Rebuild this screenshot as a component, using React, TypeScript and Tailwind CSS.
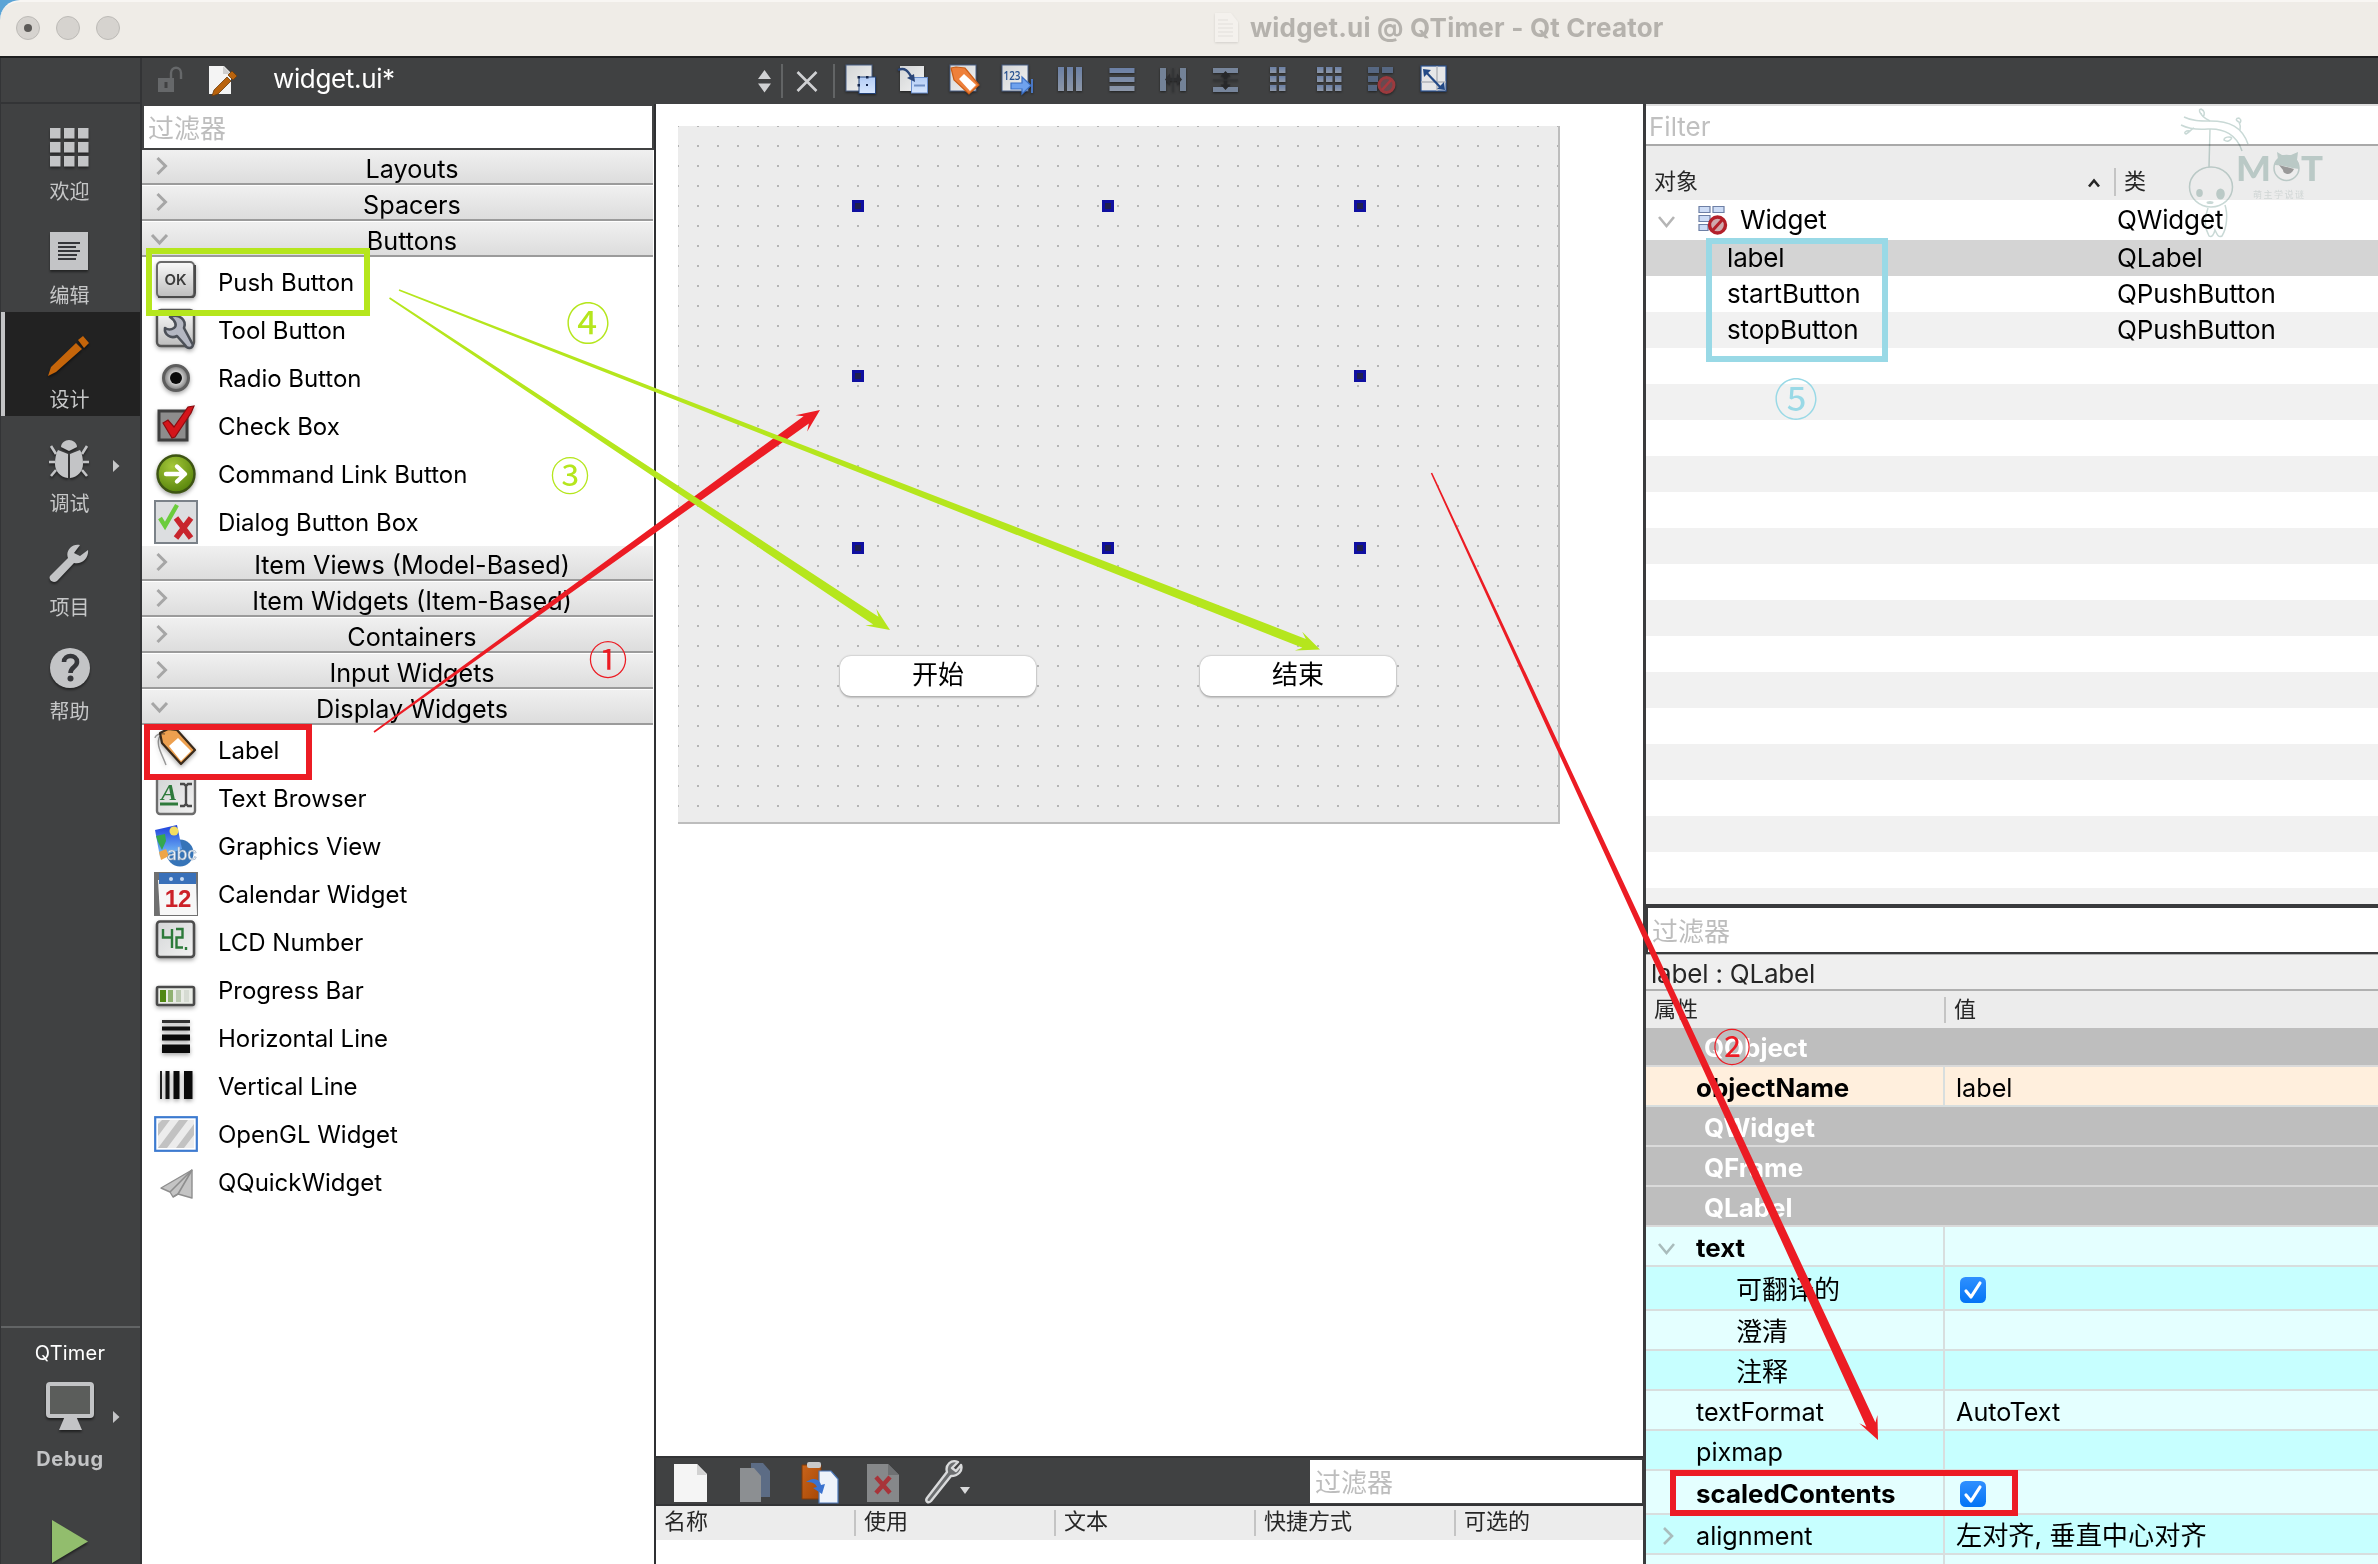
import React from "react";

type IconProps = { children: React.ReactNode; w?: number; h?: number; className?: string; vb?: string };

function Svg({ children, w = 44, h = 44, className = "", vb }: IconProps) {
  return (
    <svg width={w} height={h} viewBox={vb ?? `0 0 ${w} ${h}`} className={`shrink-0 ${className}`}>
      {children}
    </svg>
  );
}

function Defs() {
  return (
    <svg width="0" height="0" className="absolute">
      <defs>
        <linearGradient id="gBtn" x1="0" y1="0" x2="0" y2="1">
          <stop offset="0" stopColor="#fafafa" />
          <stop offset="1" stopColor="#bdbdbd" />
        </linearGradient>
        <linearGradient id="gPage" x1="0" y1="0" x2="1" y2="1">
          <stop offset="0" stopColor="#d3d5d6" />
          <stop offset="1" stopColor="#f2f2f2" />
        </linearGradient>
        <linearGradient id="gBlue" x1="0" y1="0" x2="0" y2="1">
          <stop offset="0" stopColor="#b4cdf5" />
          <stop offset="1" stopColor="#d6e6fd" />
        </linearGradient>
        <linearGradient id="gBar" x1="0" y1="0" x2="0" y2="1">
          <stop offset="0" stopColor="#6b80a6" />
          <stop offset="1" stopColor="#8d97a8" />
        </linearGradient>
        <radialGradient id="gGreen" cx="0.4" cy="0.3" r="0.8">
          <stop offset="0" stopColor="#a5c83a" />
          <stop offset="1" stopColor="#4f7d06" />
        </radialGradient>
        <radialGradient id="gRadio" cx="0.5" cy="0.5" r="0.5">
          <stop offset="0.45" stopColor="#d4d4d4" />
          <stop offset="1" stopColor="#747474" />
        </radialGradient>
        <linearGradient id="gCheck" x1="0" y1="0" x2="0" y2="1">
          <stop offset="0" stopColor="#2f90ff" />
          <stop offset="1" stopColor="#0374f5" />
        </linearGradient>
        <linearGradient id="gClip" x1="0" y1="0" x2="1" y2="1">
          <stop offset="0" stopColor="#c9641b" />
          <stop offset="1" stopColor="#a64705" />
        </linearGradient>
        <linearGradient id="gGl" x1="0" y1="0" x2="0" y2="1">
          <stop offset="0" stopColor="#1d3fdc" />
          <stop offset="1" stopColor="#7cc7f7" />
        </linearGradient>
      </defs>
    </svg>
  );
}

/* ---------- palette icons, 44 × 44 ---------- */

const shadow = "drop-shadow-[0_2px_2px_rgba(0,0,0,0.35)]";

const PushIcon = () => (
  <Svg className={shadow}>
    <rect x="3" y="2" width="37" height="35" rx="4" fill="url(#gBtn)" stroke="#6a6a6a" strokeWidth="2" />
    <path d="M4 37h35q2-1 2-4V5" fill="none" stroke="#4a4a4a" strokeWidth="2" />
    <text x="21.5" y="24.5" fontSize="15" textAnchor="middle" fontFamily="Inter, sans-serif" fontWeight="600" fill="#3c3c3c">OK</text>
  </Svg>
);
const ToolIcon = () => (
  <Svg className={shadow}>
    <rect x="3" y="2" width="37" height="36" rx="4" fill="url(#gBtn)" stroke="#555" strokeWidth="2.4" />
    <path d="M16 9c9-4 17 3 14 11l9 17c-1 4-6 4-8 0l-8-9c-6 3-13-1-12-8 3 2 6 2 9 0s2-7-4-11z" fill="#b4b7c2" stroke="#4c5058" strokeWidth="2.6" strokeLinejoin="round" />
  </Svg>
);
const RadioIcon = () => (
  <Svg className={shadow}>
    <circle cx="22" cy="22" r="12.5" fill="url(#gRadio)" stroke="#5e5e5e" strokeWidth="3" />
    <circle cx="22" cy="22" r="6" fill="#0a0a0a" />
  </Svg>
);
const CheckIcon = () => (
  <Svg className={shadow}>
    <rect x="5" y="7" width="28" height="29" fill="#8d8d8d" stroke="#3f3f3f" strokeWidth="3" />
    <path d="M9 19l5-3 6 7L34 3l6-1-3 7-16 24-3 1z" fill="#d4151b" stroke="#8c0b10" strokeWidth="1.2" />
  </Svg>
);
const LinkIcon = () => (
  <Svg className={shadow}>
    <circle cx="22" cy="22" r="18.5" fill="url(#gGreen)" stroke="#3d5413" strokeWidth="2.4" />
    <path d="M12 22h17M23 14.5l8 7.5-8 7.5" fill="none" stroke="#fff" strokeWidth="4.4" strokeLinecap="round" strokeLinejoin="round" />
  </Svg>
);
const DialogIcon = () => (
  <Svg>
    <rect x="1" y="1" width="42" height="42" fill="#dcdee0" stroke="#7b8289" strokeWidth="2" />
    <path d="M6 18l5 8L23 5" fill="none" stroke="#6bcc3c" strokeWidth="4.4" />
    <path d="M22 18l15 20M37 18L22 38" stroke="#c8252d" strokeWidth="5.6" />
  </Svg>
);
const LabelIcon = () => (
  <Svg className={shadow}>
    <path d="M6 5l8-4 9 1 18 20-14 14L8 15z" fill="#eda04f" stroke="#3a2a1a" strokeWidth="2.2" strokeLinejoin="round" />
    <path d="M24 10l13 13-10 10L15 18z" fill="#fff" />
    <path d="M11 6C4 5 1 8 1 10M6 8c-5 8 2 18 6 29" stroke="#222" strokeWidth="1.4" fill="none" opacity=".45" />
  </Svg>
);
const TextIcon = () => (
  <Svg>
    <rect x="3" y="1" width="38" height="37" rx="3" fill="url(#gPage)" stroke="#6d6d6d" strokeWidth="2.4" />
    <text x="15" y="24" fontSize="24" textAnchor="middle" fontFamily="Liberation Serif, serif" fontWeight="700" fontStyle="italic" fill="#2e7a3c">A</text>
    <path d="M6 28h18" stroke="#2e7a3c" strokeWidth="3" />
    <path d="M26 8h4l2 2 2-2h4M32 10v18M26 30h4l2-2 2 2h4" stroke="#4a4a4a" strokeWidth="2.4" fill="none" />
  </Svg>
);
const GraphicsIcon = () => (
  <Svg>
    <circle cx="26" cy="29" r="13.5" fill="#3674b8" />
    <path d="M1 6l22-5 5 24-22 8z" fill="url(#gGl)" />
    <path d="M2 12l9-2 1 7-4 9-4-8z" fill="#35a84d" />
    <circle cx="20" cy="7" r="4.5" fill="#f4dd62" />
    <path d="M5 28l7-3 3 7-8 4z" fill="#efa548" />
    <text x="13" y="36" fontSize="17" fontFamily="Inter, sans-serif" fontWeight="500" fill="#e9f1fa" stroke="#98a8bb" strokeWidth=".5">abc</text>
  </Svg>
);
const CalendarIcon = () => (
  <Svg>
    <rect width="44" height="44" fill="#707070" />
    <path d="M4 8h38l1 35H6z" fill="#f7f7f7" />
    <rect x="5" y="1" width="37" height="11" fill="#3970b9" />
    <circle cx="17" cy="7" r="2" fill="#c9dbf2" />
    <circle cx="28" cy="7" r="2" fill="#c9dbf2" />
    <text x="24" y="35" fontSize="24" textAnchor="middle" fontFamily="Liberation Sans, sans-serif" fontWeight="700" fill="#cc2128">12</text>
  </Svg>
);
const LcdIcon = () => (
  <Svg className={shadow}>
    <rect x="3" y="1.5" width="37" height="35.5" rx="3" fill="url(#gPage)" stroke="#4d4d4d" strokeWidth="2.6" />
    <path d="M9 9v8.500h9M18 9v19M22 9h6.500v8.500h-6v10h6.500M32 27v3" stroke="#2c7a3a" strokeWidth="2.4" fill="none" />
  </Svg>
);
const ProgressIcon = () => (
  <Svg className={shadow}>
    <rect x="3" y="19" width="37" height="18" rx="1.5" fill="#e9ece6" stroke="#4b4b4b" strokeWidth="2.6" />
    <rect x="6" y="22" width="6" height="12" fill="#4f8712" />
    <rect x="14" y="22" width="5" height="12" fill="#8fb171" />
    <rect x="22" y="22" width="5" height="12" fill="#bccab2" />
    <rect x="30" y="22" width="5" height="12" fill="#d6dbd3" />
  </Svg>
);
const HLineIcon = () => (
  <Svg className={shadow}>
    <rect x="8" y="4" width="28" height="3" fill="#333" />
    <rect x="8" y="10.500" width="28" height="4" fill="#111" />
    <rect x="8" y="18.500" width="28" height="6" fill="#0a0a0a" />
    <rect x="8" y="28.500" width="28" height="8.500" fill="#0a0a0a" />
  </Svg>
);
const VLineIcon = () => (
  <Svg className={shadow}>
    <rect x="6" y="7" width="2" height="28" fill="#222" />
    <rect x="11.500" y="7" width="4" height="28" fill="#111" />
    <rect x="19.500" y="7" width="6" height="28" fill="#0a0a0a" />
    <rect x="30" y="7" width="8.500" height="28" fill="#0a0a0a" />
  </Svg>
);
const GlIcon = () => (
  <Svg>
    <rect x="1.2" y="5.200" width="41.600" height="33.600" fill="#fff" stroke="#3d7bd0" strokeWidth="2.200" />
    <rect x="4" y="8" width="36" height="28" fill="#ececec" />
    <path d="M4 18v-6l4-4h8L4 24zM4 36L25 8h9L13 36zM22 36L40 12v11L30 36z" fill="#c2c2c2" />
  </Svg>
);
const PlaneIcon = () => (
  <Svg>
    <path d="M38 10L7 28l9 4 3 5 5-3 14 4z" fill="#c4c4c4" stroke="#8e8e8e" strokeWidth="1.400" strokeLinejoin="round" />
    <path d="M38 10L16 32M38 10L24 34M19 37l5-3" stroke="#8e8e8e" strokeWidth="1.600" fill="none" />
  </Svg>
);

type Item = { name: string; icon: React.ReactNode };

const buttonItems: Item[] = [
  { name: "Push Button", icon: <PushIcon /> },
  { name: "Tool Button", icon: <ToolIcon /> },
  { name: "Radio Button", icon: <RadioIcon /> },
  { name: "Check Box", icon: <CheckIcon /> },
  { name: "Command Link Button", icon: <LinkIcon /> },
  { name: "Dialog Button Box", icon: <DialogIcon /> },
];
const displayItems: Item[] = [
  { name: "Label", icon: <LabelIcon /> },
  { name: "Text Browser", icon: <TextIcon /> },
  { name: "Graphics View", icon: <GraphicsIcon /> },
  { name: "Calendar Widget", icon: <CalendarIcon /> },
  { name: "LCD Number", icon: <LcdIcon /> },
  { name: "Progress Bar", icon: <ProgressIcon /> },
  { name: "Horizontal Line", icon: <HLineIcon /> },
  { name: "Vertical Line", icon: <VLineIcon /> },
  { name: "OpenGL Widget", icon: <GlIcon /> },
  { name: "QQuickWidget", icon: <PlaneIcon /> },
];

function Section({ title, open = false, items = [] }: { title: string; open?: boolean; items?: Item[] }) {
  return (
    <div>
      <div className="flex h-[36px] flex-col">
        <div className="flex h-[33px] items-center bg-linear-to-b from-[#f0f0f0] to-[#dddddd]">
          <Svg w={38} h={33}>
            {open ? (
              <path d="M10 13l7.500 8 7.500-8" fill="none" stroke="#a6a6a6" strokeWidth="3" />
            ) : (
              <path d="M15.500 8l8 8-8 8" fill="none" stroke="#a6a6a6" strokeWidth="3" />
            )}
          </Svg>
          <div className="flex-1 pt-[4px] pr-[9px] text-center text-[25.2px] leading-[30px] whitespace-nowrap">{title}</div>
        </div>
        <div className="h-[2px] bg-[#9b9b9b]" />
      </div>
      {items.map((it) => (
        <div key={it.name} className="flex h-[48px] items-center gap-[20px] pl-[12px]">
          {it.icon}
          <span className="pt-[2px] text-[24px] leading-[30px] tracking-[-0.03px] whitespace-nowrap">{it.name}</span>
        </div>
      ))}
    </div>
  );
}

function WidgetBox() {
  return (
    <div className="flex w-[514px] shrink-0 flex-col border-r-2 border-[#2f3032] bg-white">
      <div className="h-[46px] bg-[#404142] pt-[2px] pr-[2px] pl-[2px]">
        <div className="flex h-[42px] items-center bg-white pt-[3px] pl-[4px] text-[26px] text-[#bdbdbd]">过滤器</div>
      </div>
      <div className="w-[511px]">
        <Section title="Layouts" />
        <Section title="Spacers" />
        <Section title="Buttons" open items={buttonItems} />
        <Section title="Item Views (Model-Based)" />
        <Section title="Item Widgets (Item-Based)" />
        <Section title="Containers" />
        <Section title="Input Widgets" />
        <Section title="Display Widgets" open items={displayItems} />
      </div>
    </div>
  );
}

/* ---------- mode sidebar ---------- */

function ModeItem({ label, children, active = false, arrow = false }: { label: string; children: React.ReactNode; active?: boolean; arrow?: boolean }) {
  return (
    <div className={`relative flex h-[104px] flex-col items-center pt-[20px] ${active ? "border-l-4 border-[#c3c4c6] bg-[#222222] pr-[6px]" : "pr-[2px]"}`}>
      <Svg w={46} h={46} className="mr-[2px] drop-shadow-[0_2px_1px_rgba(0,0,0,0.45)]">{children}</Svg>
      <span className="mt-[7px] text-[20px] leading-[30px] text-[#c6c7c8]">{label}</span>
      {arrow && (
        <Svg w={7} h={12} className="absolute top-[44px] left-[112px]">
          <path d="M0 0l6.500 6L0 12z" fill="#c6c7c8" />
        </Svg>
      )}
    </div>
  );
}

function Sidebar() {
  const c = "#c3c4c6";
  return (
    <div className="flex w-[142px] shrink-0 flex-col border-r-2 border-l border-[#333436] bg-[#404142]">
      <div className="h-[46px] border-b-2 border-[#333436]" />
      <ModeItem label="欢迎">
        {[4, 18, 32].map((y) => [4, 18, 32].map((x) => <rect key={`${x}-${y}`} x={x} y={y} width="10.500" height="10.500" fill={c} />))}
      </ModeItem>
      <ModeItem label="编辑">
        <rect x="4" y="4" width="38" height="38" fill={c} />
        <path d="M12 15h22M12 19h18M12 23h22M12 27h19M12 31h18" stroke="#35363a" strokeWidth="2" />
      </ModeItem>
      <ModeItem label="设计" active>
        <path d="M32 8l5-4 6 7-5 5zM30 11l6 6L10 40l-8 4 3-9z" fill="#c5650a" />
      </ModeItem>
      <ModeItem label="调试" arrow>
        <path d="M15 11c0-4 4-7 8-7s8 3 8 7l-8 4z" fill={c} />
        <path d="M12 14l10 4v24c-8-1-13-7-13-14 0-6 1-11 3-14zM34 14l-10 4v24c8-1 13-7 13-14 0-6-1-11-3-14z" fill={c} />
        <path d="M10 18L5 10M36 18l5-8M9 26H3M37 26h6M10 34l-5 6M36 34l5 6" stroke={c} strokeWidth="2.600" fill="none" />
      </ModeItem>
      <ModeItem label="项目">
        <path d="M34 5c-8-2-15 6-12 13L4 36c-2 4 3 8 7 5l17-18c8 2 15-5 14-13l-8 6-6-3z" fill={c} />
      </ModeItem>
      <ModeItem label="帮助">
        <circle cx="24" cy="24" r="20" fill={c} />
        <path d="M18 18c0-8 13-8 13 0 0 5-6.500 5-6.500 11" fill="none" stroke="#35363a" strokeWidth="4.600" />
        <circle cx="24.500" cy="34.500" r="3" fill="#35363a" />
      </ModeItem>
      <div className="flex-1" />
      <div className="relative flex h-[238px] flex-col items-center overflow-hidden border-t-2 border-[#626465] pt-[10px] pr-[1px]">
        <span className="text-[20px] leading-[30px] tracking-[0.2px] text-white">QTimer</span>
        <Svg w={52} h={54} className="mt-[12px] drop-shadow-[0_2px_1px_rgba(0,0,0,0.5)]">
          <rect x="4" y="4" width="44" height="32" rx="2" fill="#5b5d5b" stroke={c} strokeWidth="4" />
          <path d="M21 36h11l6 14H15z" fill={c} />
        </Svg>
        <Svg w={7} h={12} className="absolute top-[83px] left-[112px]">
          <path d="M0 0l6.500 6L0 12z" fill={c} />
        </Svg>
        <span className="mt-[10px] text-[20px] leading-[30px] font-bold tracking-[0.7px] text-[#c3c4c6]">Debug</span>
        <Svg w={40} h={50} className="mt-[44px] drop-shadow-[0_2px_1px_rgba(0,0,0,0.5)]">
          <path d="M2 2l36 21.500L2 45z" fill="#92bd6d" />
        </Svg>
      </div>
    </div>
  );
}

/* ---------- top tool bar ---------- */

function ToolIconBox({ children }: { children: React.ReactNode }) {
  return <Svg w={52} h={44} className="mb-[2px] drop-shadow-[0_1px_1px_rgba(0,0,0,0.5)]">{children}</Svg>;
}

const page = <rect x="11" y="7" width="26" height="26" fill="url(#gPage)" stroke="#4b6086" strokeWidth="1" />;

function TopBar() {
  return (
    <div className="flex h-[46px] items-center bg-[#404142]">
      <Svg w={44} h={46} className="ml-[8px]">
        <rect x="8" y="20" width="16" height="14" fill="#66686a" />
        <path d="M21 20v-5c0-7 10-7 10 0v6" fill="none" stroke="#66686a" strokeWidth="2.400" />
        <path d="M16 24v6" stroke="#404142" strokeWidth="3" />
      </Svg>
      <Svg w={44} h={46} className="ml-[10px]">
        <path d="M5 8h15l7 7v21H5z" fill="#f4f4f4" />
        <path d="M19 8l8 8h-8z" fill="#cfcfcf" />
        <path d="M24 17l4-4 5 5-4 4zM23 19l4 4-13 13-6 2 2-6z" fill="#b9630d" stroke="#6d3c0a" strokeWidth=".8" />
      </Svg>
      <span className="ml-[25px] w-[484px] pb-[5px] text-[26px] leading-[30px] tracking-[-0.35px] text-white">widget.ui*</span>
      <Svg w={16} h={24}>
        <path d="M1 10l6.500-9L14 10zM1 14.500l6.500 9L14 14.500z" fill="#d0d1d3" />
      </Svg>
      <div className="ml-[8px] h-[34px] w-[2px] bg-[#626465]" />
      <Svg w={50} h={46}>
        <path d="M14.500 14l19 19M33.500 14l-19 19" stroke="#d0d1d3" strokeWidth="2.600" />
      </Svg>
      <div className="h-[34px] w-[2px] bg-[#626465]" />
      <ToolIconBox>
        {page}
        <rect x="24" y="19" width="16.500" height="16.500" fill="url(#gBlue)" stroke="#234277" strokeWidth="1" />
        <path d="M22.500 18h2.500v2.500h-2.500zM31 18h2.500v2.500H31zM22.500 26h2.500v2.500h-2.500zM31 26h2v2h-2z" fill="#14254a" />
      </ToolIconBox>
      <ToolIconBox>
        <rect x="13" y="8" width="24" height="25" fill="url(#gPage)" />
        <rect x="24.500" y="19.500" width="16" height="15.500" fill="url(#gBlue)" stroke="#6a8fce" strokeWidth="1" />
        <path d="M27 27.500h11" stroke="#6f8fc4" strokeWidth="2" />
        <path d="M11 12c7-3 10 1 14 8" stroke="#2b4678" strokeWidth="2.400" fill="none" />
        <path d="M28 24l-8-4 7-4z" fill="#2b4678" />
      </ToolIconBox>
      <ToolIconBox>
        {page}
        <path d="M12 10l5-1 9 1 14 17-10 9-15-14z" fill="#ee803b" stroke="#c95d17" strokeWidth="1.200" />
        <path d="M25 16l12 11-6 6-11-12z" fill="#fff" />
      </ToolIconBox>
      <ToolIconBox>
        {page}
        <text x="12.500" y="22" fontSize="13" textLength="17" lengthAdjust="spacingAndGlyphs" fontFamily="Open Sans, sans-serif" fontWeight="600" fill="#27508f">123</text>
        <path d="M20 25h11v-6l9 8.500-9 8.500v-5H20z" fill="#6fa2ee" stroke="#3b6fc4" strokeWidth="1.200" />
        <path d="M41 21v14" stroke="#4d7fd3" strokeWidth="1.800" />
      </ToolIconBox>
      <ToolIconBox>
        <path d="M15 9h6v24h-6zM24 9h6v24h-6zM33 9h6v24h-6z" fill="url(#gBar)" />
      </ToolIconBox>
      <ToolIconBox>
        <path d="M14.500 10h25v5h-25zM14.500 19h25v5h-25zM14.500 28h25v5h-25z" fill="url(#gBar)" />
      </ToolIconBox>
      <ToolIconBox>
        <path d="M13 10h6v23h-6zM33 10h6v23h-6z" fill="#738297" />
        <path d="M18 21.500l5-6v4.500h7v-4.500l5 6-5 6V23h-7v4.500z" fill="#2d2e30" />
        <path d="M26 10v24" stroke="#333436" strokeWidth="1" />
      </ToolIconBox>
      <ToolIconBox>
        <path d="M14 10h25v5H14zM14 29h25v5H14z" fill="#77859b" />
        <path d="M26.500 13l5 5.500h-3.500v8h3.500l-5 5.500-5-5.500h3.500v-8h-3.500z" fill="#27282a" />
        <path d="M14 22h25" stroke="#333436" strokeWidth="1" />
      </ToolIconBox>
      <ToolIconBox>
        {[9, 18, 27].map((y) => [19, 28].map((x) => <rect key={`${x}-${y}`} x={x} y={y} width="6.500" height="6" fill="url(#gBar)" />))}
      </ToolIconBox>
      <ToolIconBox>
        {[9, 18, 27].map((y) => [14, 23, 32].map((x) => <rect key={`${x}-${y}`} x={x} y={y} width="6.500" height="6" fill="url(#gBar)" />))}
      </ToolIconBox>
      <ToolIconBox>
        <path d="M13 9h11v6H13zM27 9h11v6H27zM13 18h10v6H13zM13 27h9v6h-9z" fill="#566782" />
        <circle cx="31.500" cy="27" r="7.500" fill="#694a50" stroke="#9b3a3e" strokeWidth="3" />
        <path d="M27 32l9-10" stroke="#a8393e" strokeWidth="2.600" />
      </ToolIconBox>
      <ToolIconBox>
        <rect x="14" y="8" width="25" height="25" fill="#e6e7e8" stroke="#2d5594" strokeWidth="1.200" />
        <path d="M14 24h25M30 8v25" stroke="#aeb2b8" strokeWidth="1.400" />
        <path d="M18 13l16 17" stroke="#244a86" strokeWidth="2.200" />
        <path d="M16 11l8 1-7 7zM38 32l-8-1 7-7z" fill="#244a86" />
      </ToolIconBox>
    </div>
  );
}

/* ---------- form canvas ---------- */

const handles: [number, number][] = [
  [174, 74], [424, 74], [676, 74],
  [174, 244], [676, 244],
  [174, 416], [424, 416], [676, 416],
];

function FormCanvas() {
  return (
    <div className="relative mt-[22px] ml-[22px] h-[698px] w-[882px] border-r-2 border-b-2 border-[#bdbdbd] bg-[#ececec] bg-[radial-gradient(circle,#b4b4b4_0px,#b4b4b4_1px,transparent_1.3px)] bg-size-[20px_20px] bg-position-[-10px_-10px]">
      {handles.map(([x, y]) => (
        <div key={`${x}-${y}`} className="absolute size-[12px] border-[3px] border-[#0f0fa0] bg-[#1f1f50]" style={{ left: x, top: y }} />
      ))}
      <div className="absolute top-[530px] left-[162px] flex h-[40px] w-[196px] items-center justify-center rounded-[11px] bg-white pb-[3px] text-[26px] shadow-[0_0_2px_rgba(0,0,0,0.35),0_2px_2px_rgba(0,0,0,0.18)]">开始</div>
      <div className="absolute top-[530px] left-[522px] flex h-[40px] w-[196px] items-center justify-center rounded-[11px] bg-white pb-[3px] text-[26px] shadow-[0_0_2px_rgba(0,0,0,0.35),0_2px_2px_rgba(0,0,0,0.18)]">结束</div>
    </div>
  );
}

function ActionEditor() {
  return (
    <div className="h-[108px] bg-white">
      <div className="flex h-[50px] items-center border-t-2 border-b-2 border-[#333436] bg-[#404142]">
        <Svg w={58} h={46} className="ml-[8px]">
          <path d="M10 6h23l10 10v28H10z" fill="#f5f5f5" />
          <path d="M33 6l10 11H33z" fill="#d2d2d2" />
        </Svg>
        <Svg w={64} h={46}>
          <path d="M29 5h12l7 8v26H29z" fill="#5c6c85" />
          <path d="M18 10h14l7 8v26H18z" fill="#8c8f92" />
        </Svg>
        <Svg w={68} h={46}>
          <path d="M16 7h19v34H16z" fill="url(#gClip)" stroke="#7d3a0a" strokeWidth="1" />
          <rect x="21" y="4" width="14" height="6" rx="2" fill="#c9c9c9" />
          <path d="M33 13h12l7 8v24H33z" fill="#eef3fa" stroke="#4a77b8" strokeWidth="1.200" />
          <path d="M20 24c8-6 14-2 15 3l4-1-3 10-9-6 4-1c-2-4-5-5-11-5z" fill="#3a73d0" />
        </Svg>
        <Svg w={56} h={46}>
          <path d="M13 6h21l11 11v27H13z" fill="#86888a" />
          <path d="M34 6l11 11H34z" fill="#6f7173" />
          <path d="M22 19l14 16M36 19L22 35" stroke="#a8343a" strokeWidth="4.400" />
        </Svg>
        <Svg w={70} h={46}>
          <path d="M48 4c-7-3-13 3-11 10L17 40c-2 3 1 6 4 3l20-25c7 0 12-5 10-11l-5 6-4-3z" fill="#6b6d6f" stroke="#d9dadb" strokeWidth="2.400" strokeLinejoin="round" />
          <path d="M50 29h10l-5 7z" fill="#d9dadb" />
        </Svg>
        <div className="flex-1" />
        <div className="mr-[1px] flex h-[43px] w-[332px] items-center bg-white pt-[3px] pl-[5px] text-[26px] text-[#bdbdbd]">过滤器</div>
      </div>
      <div className="flex h-[34px] items-center bg-[#ececec] text-[22px] text-[#262626]">
        {["名称", "使用", "文本", "快捷方式", "可选的"].map((t, i) => (
          <div key={t} className={`flex h-[26px] shrink-0 items-center border-r-2 pb-[3px] pl-[8px] ${i === 4 ? "w-[186px] border-transparent" : "w-[200px] border-[#c4c4c4]"}`}>
            {t}
          </div>
        ))}
      </div>
    </div>
  );
}

/* ---------- right column ---------- */

function ObjectRow({ name, cls, bg, child = true }: { name: string; cls: string; bg: string; child?: boolean }) {
  return (
    <div className={`flex items-center text-[26px] leading-[30px] tracking-[-0.15px] ${bg} ${child ? "h-[36px] pl-[81px]" : "h-[40px]"}`}>
      {!child && (
        <>
          <Svg w={48} h={40}>
            <path d="M13 17l7.500 9 7.500-9" fill="none" stroke="#b5b5b5" strokeWidth="2.600" />
          </Svg>
          <Svg w={46} h={40}>
            <path d="M5 6.500h11v6H5zM19 6.500h11v6H19zM5 15.500h11v6H5zM5 24.500h9v6H5z" fill="#cddcf6" stroke="#6d7fa5" strokeWidth="1.200" />
            <circle cx="23.500" cy="25" r="8" fill="#cfa9ad" stroke="#b3202a" strokeWidth="3.400" />
            <path d="M18.500 30.500l10-11" stroke="#b3202a" strokeWidth="3" />
          </Svg>
        </>
      )}
      <span className={child ? "w-[390px]" : "w-[377px]"}>{name}</span>
      <span>{cls}</span>
    </div>
  );
}

function ObjectInspector() {
  return (
    <div className="flex h-[800px] flex-col bg-white">
      <div className="flex h-[42px] items-center border-t-2 border-b-2 border-t-[#dedede] border-b-[#a9a9a9] pt-[3px] pl-[3px] text-[26px] text-[#c0c0c0]">Filter</div>
      <div className="flex h-[54px] items-end bg-[#ececec] pb-[4px] text-[22px] text-[#262626]">
        <div className="flex h-[28px] w-[470px] items-center justify-between border-r-2 border-[#c4c4c4] pr-[13px] pb-[2px] pl-[8px]">
          对象
          <Svg w={14} h={12} className="mt-[3px]">
            <path d="M2 9.500l5-6 5 6" fill="none" stroke="#262626" strokeWidth="2.600" />
          </Svg>
        </div>
        <div className="flex h-[28px] items-center pb-[2px] pl-[8px]">类</div>
      </div>
      <ObjectRow name="Widget" cls="QWidget" bg="bg-white" child={false} />
      <ObjectRow name="label" cls="QLabel" bg="bg-[#d4d4d4]" />
      <ObjectRow name="startButton" cls="QPushButton" bg="bg-white" />
      <ObjectRow name="stopButton" cls="QPushButton" bg="bg-[#f1f1f1]" />
      <div className="flex-1 bg-[repeating-linear-gradient(to_bottom,#ffffff_0px,#ffffff_36px,#f1f1f1_36px,#f1f1f1_72px)]" />
    </div>
  );
}

const CheckMark = () => (
  <Svg w={28} h={28} className="ml-[-1px]">
    <rect x="1" y="1" width="26" height="26" rx="5.500" fill="url(#gCheck)" />
    <path d="M7 15l5 6 9-14" fill="none" stroke="#fff" strokeWidth="3.200" strokeLinecap="round" strokeLinejoin="round" />
  </Svg>
);

type Prop = { name: string; value?: React.ReactNode; bg: string; h: string; bold?: boolean; indent?: boolean; arrow?: "down" | "right" };

const LIGHT = "bg-[#e4ffff]";
const CYAN = "bg-[#c7ffff]";

const objectProps: Prop[] = [
  { name: "objectName", value: "label", bg: "bg-[#ffefdd]", h: "h-[40px]", bold: true },
];
const labelProps: Prop[] = [
  { name: "text", bg: LIGHT, h: "h-[40px]", bold: true, arrow: "down" },
  { name: "可翻译的", value: <CheckMark />, bg: CYAN, h: "h-[44px]", indent: true },
  { name: "澄清", bg: LIGHT, h: "h-[40px]", indent: true },
  { name: "注释", bg: CYAN, h: "h-[40px]", indent: true },
  { name: "textFormat", value: "AutoText", bg: LIGHT, h: "h-[40px]" },
  { name: "pixmap", bg: CYAN, h: "h-[40px]" },
  { name: "scaledContents", value: <CheckMark />, bg: LIGHT, h: "h-[44px]", bold: true },
  { name: "alignment", value: "左对齐, 垂直中心对齐", bg: CYAN, h: "h-[40px]", arrow: "right" },
  { name: "", bg: LIGHT, h: "h-[40px]" },
];

function PropRow({ p }: { p: Prop }) {
  return (
    <div className={`flex shrink-0 items-stretch border-b-2 border-[#d8dede] text-[25.2px] leading-[30px] ${p.bg} ${p.h}`}>
      <div className={`flex w-[299px] items-center border-r-2 border-[#d8dede] pt-[3px] ${p.bold ? "text-[25.9px] font-bold" : ""}`}>
        <Svg w={50} h={38} className={p.indent ? "mr-[40px]" : ""}>
          {p.arrow === "down" && <path d="M13 15l7.500 9 7.500-9" fill="none" stroke="#a9bcbc" strokeWidth="2.600" />}
          {p.arrow === "right" && <path d="M18 11l8 8-8 8" fill="none" stroke="#a9bcbc" strokeWidth="2.600" />}
        </Svg>
        <span className={p.indent ? "text-[26px]" : ""}>{p.name}</span>
      </div>
      <div className="flex items-center pt-[3px] pl-[11px]">{typeof p.value === "string" ? <span className={p.name === "alignment" ? "text-[26.2px]" : ""}>{p.value}</span> : <span className="ml-[4px]">{p.value}</span>}</div>
    </div>
  );
}

function GroupRow({ name, first = false }: { name: string; first?: boolean }) {
  return (
    <div className={`flex shrink-0 items-center border-b-2 border-[#dadada] bg-[#bebebe] pt-[3px] pl-[58px] text-[25.900px] leading-[30px] font-bold text-white ${first ? "h-[39px]" : "h-[40px]"}`}>
      {name}
    </div>
  );
}

function PropertyEditor() {
  return (
    <div className="flex flex-1 flex-col overflow-hidden border-t-4 border-[#3a3b3d]">
      <div className="flex h-[46px] shrink-0 items-center border-b-2 border-l-2 border-[#3a3b3d] bg-white pt-[3px] pl-[4px] text-[26px] text-[#bdbdbd]">过滤器</div>
      <div className="flex h-[37px] shrink-0 items-center border-t border-b-2 border-[#b0b0b0] bg-[#efefef] pt-[3px] pl-[5px] text-[26px] leading-[30px] tracking-[-0.2px] text-[#262626] [font-feature-settings:'calt'_0]">label : QLabel</div>
      <div className="flex h-[37px] shrink-0 items-center bg-[#ececec] text-[22px] text-[#262626]">
        <div className="flex h-[26px] w-[300px] items-center border-r-2 border-[#c4c4c4] pl-[8px]">属性</div>
        <div className="pl-[8px]">值</div>
      </div>
      <GroupRow name="QObject" first />
      {objectProps.map((p) => <PropRow key={p.name} p={p} />)}
      <GroupRow name="QWidget" />
      <GroupRow name="QFrame" />
      <GroupRow name="QLabel" />
      {labelProps.map((p) => <PropRow key={p.name} p={p} />)}
    </div>
  );
}

/* ---------- overlay marks ---------- */

/** Tapered arrow: hairline at the tail, widening towards a barbed head. */
function Arrow({ x1, y1, x2, y2, w, color }: { x1: number; y1: number; x2: number; y2: number; w: number; color: string }) {
  const len = Math.hypot(x2 - x1, y2 - y1);
  const ux = (x2 - x1) / len;
  const uy = (y2 - y1) / len;
  const pt = (along: number, side: number) => `${x1 + ux * along - uy * side},${y1 + uy * along + ux * side}`;
  const points = [pt(0, -0.8), pt(len - 17, -w / 2), pt(len - 23, -10), pt(len, 0), pt(len - 23, 10), pt(len - 17, w / 2), pt(0, 0.8)].join(" ");
  return <polygon points={points} fill={color} />;
}

function Overlay() {
  const wm = "#c9d9d6";
  return (
    <div className="pointer-events-none absolute inset-0">
      <Svg w={180} h={150} className="absolute top-[96px] left-[2160px] mix-blend-multiply">
        <g fill="none" stroke={wm} strokeWidth="1.500">
          <path d="M24 21c8 4 16 4 26 4 20 0 32 6 38 23M21 29c8 4 16 5 27 4 16-1 29 6 34 22M50 33l-1 38" />
          <path d="M50 25c-6-3-9-5-9-8M41 18c-3-4-1-5 0-5 4 2 4 5 2 8M80 34c1-4 0-6-1-8-4-2-3-4 0-4 3 2 2 4 0 6M34 32c-3 1-4 4-8 6-3-1 0-4 4-3M72 42c-2-2-8-1-8 2 4 3 6 0 8-2" />
          <ellipse cx="51" cy="91" rx="21.500" ry="20" />
          <path d="M48 112c-3 8-4 19 1 28 3 2 5-2 6-6 2 4 3 8 7 6 5-8 6-22 3-31" />
          <circle cx="126.500" cy="72" r="12.500" />
        </g>
        <ellipse cx="39.500" cy="97" rx="3.300" ry="4" fill={wm} />
        <ellipse cx="60.500" cy="98" rx="4.300" ry="5.500" fill={wm} />
        <ellipse cx="50" cy="106.500" rx="3.500" ry="1.500" fill={wm} />
        <path d="M118 63l-1-7 5 3h9l7-3-1 8c2 3 2 6 2 9-9-1-16-4-24-4 0-2 1-4 3-6z" fill={wm} />
        <path d="M119 69l15 4c-2 4-4 5-7 5-3-1-4-2-4-4z" fill="#a5a5a5" />
        <text x="76" y="85" fontSize="35" textLength="35" lengthAdjust="spacingAndGlyphs" fontFamily="Lato, sans-serif" fontWeight="900" fill={wm}>M</text>
        <text x="141" y="85" fontSize="35" textLength="22" lengthAdjust="spacingAndGlyphs" fontFamily="Lato, sans-serif" fontWeight="900" fill={wm}>T</text>
        <text x="93" y="102" fontSize="9" letterSpacing="1.500" fontFamily="Noto Sans CJK SC, sans-serif" fill="#e2e8e7">萌主学说谜</text>
      </Svg>

      <svg width="2378" height="1564" viewBox="0 0 2378 1564" className="absolute inset-0">
        <Arrow x1={374} y1={732} x2={820} y2={410} w={9} color="#ec1c24" />
        <Arrow x1={1431.500} y1={473} x2={1878} y2={1440} w={10} color="#ec1c24" />
        <Arrow x1={399} y1={290} x2={1320} y2={649.500} w={9.500} color="#b5e61d" />
        <Arrow x1={389.500} y1={298} x2={890} y2={630} w={9.500} color="#b5e61d" />
      </svg>

      <div className="absolute top-[248px] left-[146px] h-[68px] w-[224px] border-[6px] border-[#b5e61d]" />
      <div className="absolute top-[724px] left-[144px] h-[56px] w-[168px] border-[6px] border-[#ec1c24]" />
      <div className="absolute top-[1470px] left-[1670px] h-[46px] w-[348px] border-[6px] border-[#ec1c24]" />
      <div className="absolute top-[238px] left-[1706px] h-[124px] w-[182px] border-[6px] border-[#99d9e6]" />

      <div className="font-['Noto_Sans_CJK_SC',sans-serif] font-normal">
        <span className="absolute top-[632px] left-[583px] flex size-[50px] items-center justify-center text-[39px] leading-none text-[#ec1c24]">①</span>
        <span className="absolute top-[1020px] left-[1707px] flex size-[50px] items-center justify-center text-[38px] leading-none text-[#ec1c24]">②</span>
        <span className="absolute top-[448px] left-[545px] flex size-[50px] items-center justify-center text-[39px] leading-none text-[#b5e61d]">③</span>
        <span className="absolute top-[296px] left-[563px] flex size-[50px] items-center justify-center text-[44px] leading-none text-[#b5e61d]">④</span>
        <span className="absolute top-[372px] left-[1771px] flex size-[50px] items-center justify-center text-[44px] leading-none text-[#99d9e6]">⑤</span>
      </div>
    </div>
  );
}

function TitleBar() {
  return (
    <div className="bg-[#5ba4d6]">
      <div className="flex h-[58px] items-center rounded-tl-[20px] border-t-2 border-b-2 border-t-[#f8f6f3] border-b-[#1e1f20] bg-[#efece7] pb-[2px] pl-[16px]">
        <div className="flex gap-[16px]">
          <div className="flex size-[24px] items-center justify-center rounded-full border border-[#bdbbb7] bg-[#d6d3cf]">
            <div className="size-[8px] rounded-full bg-[#5c5a58]" />
          </div>
          <div className="size-[24px] rounded-full border border-[#bdbbb7] bg-[#d6d3cf]" />
          <div className="size-[24px] rounded-full border border-[#bdbbb7] bg-[#d6d3cf]" />
        </div>
        <div className="ml-[1092px] flex items-center gap-[10px]">
          <Svg w={28} h={34} className="drop-shadow-[0_1px_1px_rgba(0,0,0,0.12)]">
            <path d="M3 2h16l7 9v20H3z" fill="#f4f1ed" />
            <path d="M6 9h10M6 13h15M6 17h15M6 21h15M6 25h15" stroke="#ebe8e4" strokeWidth="2" />
          </Svg>
          <span className="text-[26px] leading-[30px] font-bold tracking-[0.2px] whitespace-nowrap text-[#b5b2ad] [font-feature-settings:'calt'_0]">widget.ui @ QTimer - Qt Creator</span>
        </div>
      </div>
    </div>
  );
}

export default function App() {
  return (
    <div className="relative flex h-[1564px] w-[2378px] flex-col overflow-hidden bg-white font-['Inter','Noto_Sans_CJK_SC',sans-serif] text-black">
      <Defs />
      <TitleBar />
      <div className="flex min-h-0 flex-1">
        <Sidebar />
        <div className="flex min-w-0 flex-1 flex-col">
          <TopBar />
          <div className="flex min-h-0 flex-1">
            <WidgetBox />
            <div className="flex w-[987px] shrink-0 flex-col">
              <div className="flex-1">
                <FormCanvas />
              </div>
              <ActionEditor />
            </div>
            <div className="flex min-w-0 flex-1 flex-col border-l-[3px] border-[#3a3b3d]">
              <ObjectInspector />
              <PropertyEditor />
            </div>
          </div>
        </div>
      </div>
      <Overlay />
    </div>
  );
}
